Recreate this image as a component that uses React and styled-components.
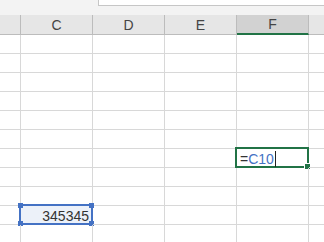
import styled, { createGlobalStyle, css } from 'styled-components';

const GlobalStyle = createGlobalStyle`
  html, body {
    margin: 0;
    padding: 0;
    background: #ffffff;
    overflow: hidden;
  }
  body {
    font-family: "Liberation Sans", Arial, sans-serif;
  }
`;

const Sheet = styled.div`
  width: 324px;
  height: 242px;
  overflow: hidden;
  background: #ffffff;
`;

const FormulaStrip = styled.div`
  height: 15px;
  background: #f3f3f3;
  padding-left: 98px;
`;

const FormulaInput = styled.div`
  height: 5px;
  background: #ffffff;
  border-left: 1px solid #c6c6c6;
  border-bottom: 1px solid #c6c6c6;
`;

const Row = styled.div`
  display: flex;
  height: ${(p) => p.h}px;
`;

const HeaderCell = styled.div`
  flex: 0 0 ${(p) => p.w}px;
  box-sizing: border-box;
  background: ${(p) => (p.active ? '#d2d2d2' : '#e6e6e6')};
  border-right: 1px solid #bcbcbc;
  border-bottom: ${(p) => (p.active ? '2px solid #217346' : '1px solid #bcbcbc')};
  display: flex;
  justify-content: center;
  align-items: flex-end;
  padding-bottom: 1px;
  font-size: 14px;
  line-height: 16px;
  color: #444444;
`;

const Cell = styled.div`
  position: relative;
  flex: 0 0 ${(p) => p.w}px;
  box-sizing: border-box;
  border-right: 1px solid #d8d8d8;
  border-bottom: 1px solid #d8d8d8;
  display: flex;
  align-items: flex-end;
  justify-content: ${(p) => (p.right ? 'flex-end' : 'flex-start')};
  padding: 0 3px 0 3px;
  font-size: 14px;
  line-height: 16px;
  color: #333333;
`;

const Frame = styled.div`
  position: absolute;
  left: -2px;
  top: -2px;
  right: -1px;
  bottom: -1px;
  box-sizing: border-box;
  pointer-events: none;
  ${(p) =>
    p.kind === 'active'
      ? css`
          border: 2px solid #217346;
        `
      : css`
          border: 2px solid #4472c4;
          background: rgba(68, 114, 196, 0.1);
        `}
`;

const Handle = styled.span`
  position: absolute;
  width: 5px;
  height: 5px;
  background: ${(p) => p.color};
  ${(p) => (p.top ? 'top: -3px;' : 'bottom: -3px;')}
  ${(p) => (p.left ? 'left: -3px;' : 'right: -3px;')}
  ${(p) => p.outline && 'box-shadow: 0 0 0 1px #ffffff;'}
`;

const CellText = styled.span`
  position: relative;
  z-index: 1;
  white-space: nowrap;
`;

const Ref = styled.span`
  color: #4472c4;
`;

const Caret = styled.span`
  display: inline-block;
  width: 1px;
  height: 16px;
  margin-left: 1px;
  vertical-align: bottom;
  background: #222222;
`;

const COLS = [
  { key: 'B', w: 21 },
  { key: 'C', w: 72 },
  { key: 'D', w: 72 },
  { key: 'E', w: 72 },
  { key: 'F', w: 72 },
  { key: 'G', w: 40 },
];

const ROWS = [1, 2, 3, 4, 5, 6, 7, 8, 9, 10, 11];

function renderCell(col, row) {
  if (col === 'F' && row === 7) {
    return (
      <>
        <Frame kind="active">
          <Handle color="#217346" outline />
        </Frame>
        <CellText>
          =<Ref>C10</Ref>
          <Caret />
        </CellText>
      </>
    );
  }
  if (col === 'C' && row === 10) {
    return (
      <>
        <Frame kind="ref">
          <Handle color="#4472c4" top left />
          <Handle color="#4472c4" top />
          <Handle color="#4472c4" left />
          <Handle color="#4472c4" />
        </Frame>
        <CellText>345345</CellText>
      </>
    );
  }
  return null;
}

export default function App() {
  return (
    <Sheet>
      <GlobalStyle />
      <FormulaStrip>
        <FormulaInput />
      </FormulaStrip>
      <Row h={20}>
        {COLS.map((c) => (
          <HeaderCell key={c.key} w={c.w} active={c.key === 'F'}>
            {c.key === 'B' || c.key === 'G' ? '' : c.key}
          </HeaderCell>
        ))}
      </Row>
      {ROWS.map((r) => (
        <Row key={r} h={19}>
          {COLS.map((c) => (
            <Cell key={c.key} w={c.w} right={c.key === 'C'}>
              {renderCell(c.key, r)}
            </Cell>
          ))}
        </Row>
      ))}
    </Sheet>
  );
}
